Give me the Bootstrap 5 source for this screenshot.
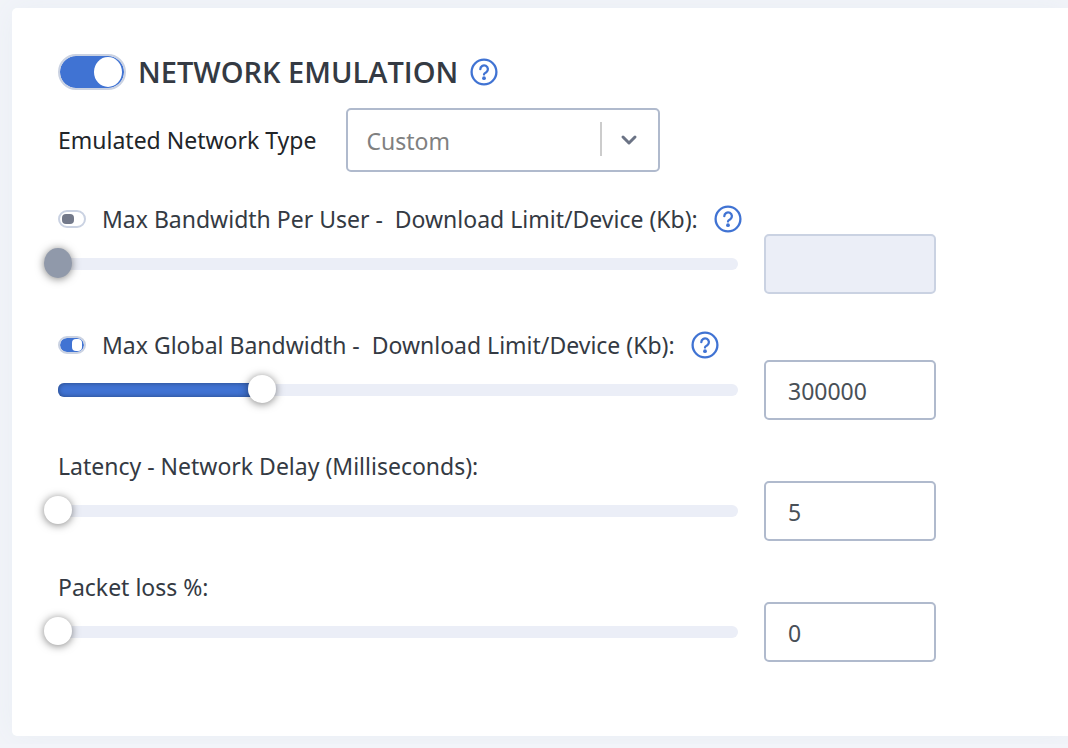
<!DOCTYPE html>
<html lang="en">
<head>
<meta charset="utf-8">
<meta name="viewport" content="width=device-width, initial-scale=1">
<title>Network Emulation</title>
<link href="https://cdn.jsdelivr.net/npm/bootstrap@5.3.0/dist/css/bootstrap.min.css" rel="stylesheet">
<style>
  :root { --brand: #4073d3; --line: #b0bacd; --soft-line: #cad2e2; --rail: #ebeef7; --ink: #343a43; }
  body { background: #f2f4f9; font-family: "Noto Sans", "Open Sans", sans-serif; font-size: 23px; line-height: 30px; color: var(--ink); }
  .panel { border-radius: 5px 0 0 5px; padding: 46px 46px 74px; box-shadow: 0 0 32px #e9eef4; }
  .panel-title { font-family: "Open Sans", sans-serif; font-size: 29px; line-height: 36px; font-weight: 600; }
  .panel-form { max-width: 878px; }
  .panel-head { gap: 12px; }

  /* Switches */
  .toggle { appearance: none; flex: none; display: flex; align-items: center; margin: 0; width: 28px; height: 18px; padding: 0 2px; border: 2px solid var(--soft-line); border-radius: 9px; background: #fff; cursor: pointer; }
  .toggle::before { content: ""; width: 12px; height: 10px; border-radius: 4px; background: #73798a; }
  .toggle:checked { background: var(--brand); background-clip: padding-box; justify-content: flex-end; }
  .toggle:checked::before { width: 10px; height: 12px; background: #fff; }
  .toggle-lg { width: 68px; height: 36px; border-radius: 18px; }
  .toggle-lg:checked::before { width: 28px; height: 30px; border-radius: 50%; }

  .help { width: 28px; height: 28px; color: var(--brand); }
  .help svg { display: block; }

  /* Network type */
  .type-row { margin-top: 18px; margin-bottom: 32px; gap: 30px; color: #212529; }
  .type-select { width: 314px; height: 64px; padding: 2px 64px 0 18px; border: 2px solid var(--line); border-radius: 5px; font-size: 23px; line-height: 30px; color: #808080;
    background-image: url("data:image/svg+xml,%3Csvg xmlns='http://www.w3.org/2000/svg' width='58' height='60' fill='none'%3E%3Cpath d='M0 12v34' stroke='%23ccc' stroke-width='4'/%3E%3Cpath d='M23 27l6 6 6-6' stroke='%236b7385' stroke-width='3' stroke-linecap='round' stroke-linejoin='round'/%3E%3C/svg%3E");
    background-size: 58px 60px; background-position: right 0 center; }

  /* Limits */
  .field + .field { margin-top: 31px; }
  .field-switched + .field-switched { margin-top: 36px; }
  .field-head { height: 30px; gap: 16px; }
  .field-body { gap: 26px; }
  .rail { height: 12px; border-radius: 6px; background: var(--rail); }
  .rail-fill { height: 14px; border-radius: 6px 0 0 6px; background: var(--brand); box-shadow: inset 0 0 5px rgba(0,0,0,.4); }
  .slider { position: absolute; left: -14px; top: -9px; width: calc(100% + 28px); height: 28px; margin: 0; appearance: none; background: transparent; }
  .slider::-webkit-slider-runnable-track { height: 28px; background: transparent; }
  .slider::-webkit-slider-thumb { appearance: none; width: 28px; height: 28px; border-radius: 50%; background: #fff; box-shadow: 0 1px 8px rgba(0,0,0,.5); }
  .slider::-moz-range-thumb { border: 0; width: 28px; height: 28px; border-radius: 50%; background: #fff; box-shadow: 0 1px 8px rgba(0,0,0,.5); }
  .slider:disabled { top: -10px; }
  .slider:disabled::-webkit-slider-thumb { height: 30px; background: #9099aa; }
  .amount { flex: none; width: 172px; height: 60px; padding: 2px 22px 0; border: 2px solid var(--line); border-radius: 5px; font-size: 23px; line-height: 30px; color: #495057; }
  .amount:disabled { background: var(--rail); border-color: var(--soft-line); }
</style>
</head>
<body>
<svg class="d-none" aria-hidden="true">
  <symbol id="help-icon" viewBox="0 0 28 28">
    <circle cx="14" cy="14" r="12.4" fill="none" stroke="currentColor" stroke-width="2.3"/>
    <path d="M10.3 11.2a3.8 3.8 0 1 1 6 3.1c-1.6.9-2.3 1.2-2.3 2.2" fill="none" stroke="currentColor" stroke-width="2.3" stroke-linecap="round"/>
    <circle cx="14" cy="20.2" r="1.9" fill="currentColor"/>
  </symbol>
</svg>

<main class="pt-2 ps-2 pb-2">
  <section class="panel bg-white ms-1">
    <form class="panel-form">
      <div class="panel-head d-flex align-items-center">
        <input class="toggle toggle-lg" type="checkbox" role="switch" id="emulation" checked>
        <h1 class="panel-title mb-0"><label for="emulation">NETWORK EMULATION</label></h1>
        <button type="button" class="help btn p-0 border-0" aria-label="About network emulation"><svg width="28" height="28"><use href="#help-icon"/></svg></button>
      </div>

      <div class="type-row d-flex flex-wrap align-items-center">
        <label for="network-type">Emulated Network Type</label>
        <select class="type-select form-select" id="network-type"><option>Custom</option></select>
      </div>

      <div class="field field-switched">
        <div class="field-head d-flex align-items-center">
          <input class="toggle" type="checkbox" role="switch" id="user-on" aria-label="Limit bandwidth per user">
          <label for="user-limit">Max Bandwidth Per User -&nbsp; Download Limit/Device (Kb):</label>
          <button type="button" class="help btn p-0 border-0" aria-label="About bandwidth per user"><svg width="28" height="28"><use href="#help-icon"/></svg></button>
        </div>
        <div class="field-body d-flex align-items-center">
          <div class="rail position-relative flex-grow-1">
            <input class="slider" type="range" min="0" max="1000000" value="0" disabled aria-label="Max bandwidth per user">
          </div>
          <input class="amount form-control" type="text" id="user-limit" disabled>
        </div>
      </div>

      <div class="field field-switched">
        <div class="field-head d-flex align-items-center">
          <input class="toggle" type="checkbox" role="switch" id="global-on" aria-label="Limit global bandwidth" checked>
          <label for="global-limit">Max Global Bandwidth -&nbsp; Download Limit/Device (Kb):</label>
          <button type="button" class="help btn p-0 border-0" aria-label="About global bandwidth"><svg width="28" height="28"><use href="#help-icon"/></svg></button>
        </div>
        <div class="field-body d-flex align-items-center">
          <div class="rail d-flex align-items-center position-relative flex-grow-1">
            <div class="rail-fill" style="width: 30%"></div>
            <input class="slider" type="range" min="0" max="1000000" value="300000" aria-label="Max global bandwidth">
          </div>
          <input class="amount form-control" type="text" id="global-limit" value="300000">
        </div>
      </div>

      <div class="field">
        <div class="field-head d-flex align-items-center">
          <label for="latency">Latency - Network Delay (Milliseconds):</label>
        </div>
        <div class="field-body d-flex align-items-center">
          <div class="rail position-relative flex-grow-1">
            <input class="slider" type="range" min="5" max="1000" value="5" aria-label="Latency">
          </div>
          <input class="amount form-control" type="text" id="latency" value="5">
        </div>
      </div>

      <div class="field">
        <div class="field-head d-flex align-items-center">
          <label for="loss">Packet loss %:</label>
        </div>
        <div class="field-body d-flex align-items-center">
          <div class="rail position-relative flex-grow-1">
            <input class="slider" type="range" min="0" max="100" value="0" aria-label="Packet loss">
          </div>
          <input class="amount form-control" type="text" id="loss" value="0">
        </div>
      </div>
    </form>
  </section>
</main>
<script src="https://cdn.jsdelivr.net/npm/bootstrap@5.3.0/dist/js/bootstrap.bundle.min.js"></script>
</body>
</html>
